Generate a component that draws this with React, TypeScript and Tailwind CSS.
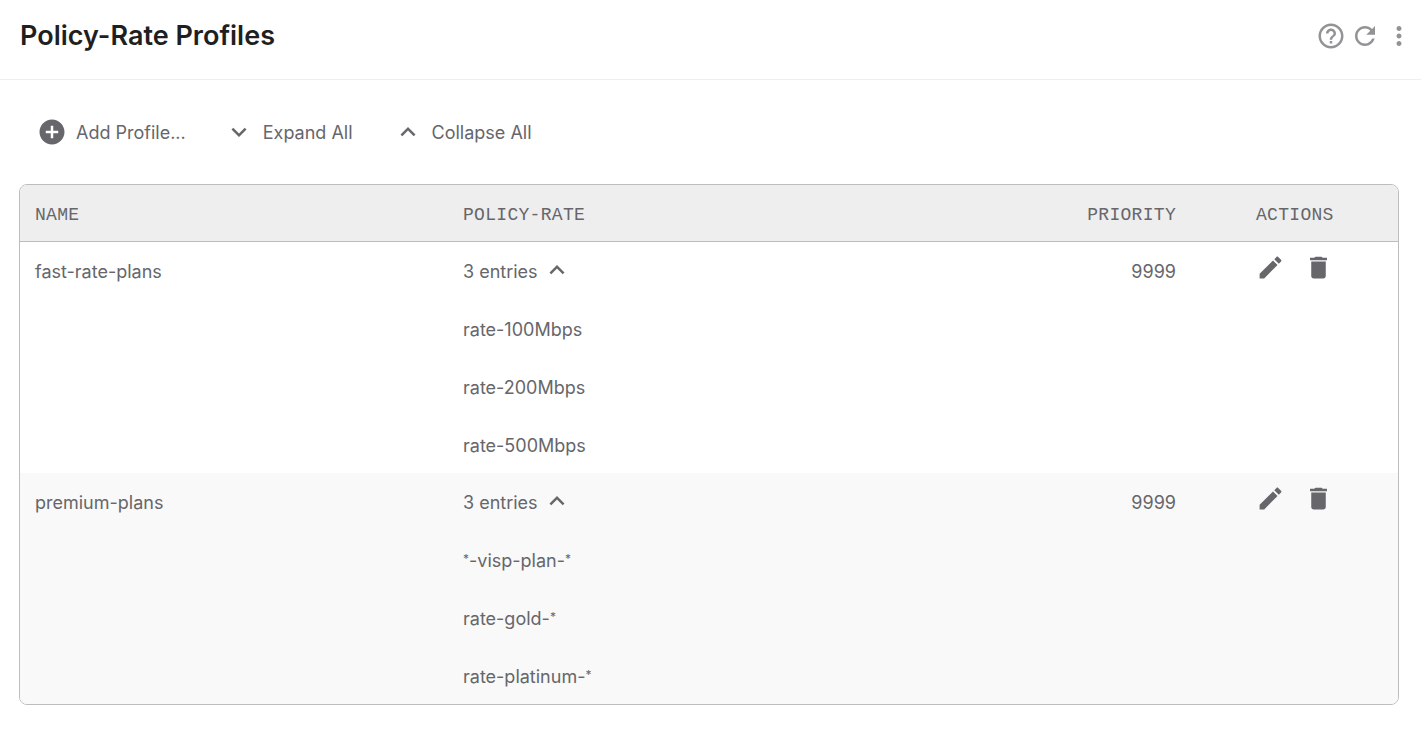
import type { ReactNode } from 'react'

const sans = 'font-["Inter","Liberation_Sans",sans-serif]'

function Icon({ d, className }: { d: string; className?: string }) {
  return (
    <svg viewBox="0 0 24 24" fill="currentColor" className={className}>
      <path d={d} />
    </svg>
  )
}

const paths = {
  help: 'M11 18h2v-2h-2v2zm1-16C6.48 2 2 6.48 2 12s4.48 10 10 10 10-4.48 10-10S17.52 2 12 2zm0 18c-4.41 0-8-3.59-8-8s3.59-8 8-8 8 3.59 8 8-3.59 8-8 8zm0-14c-2.21 0-4 1.79-4 4h2c0-1.1.9-2 2-2s2 .9 2 2c0 2-3 1.75-3 5h2c0-2.25 3-2.5 3-5 0-2.21-1.79-4-4-4z',
  refresh: 'M17.65 6.35C16.2 4.9 14.21 4 12 4c-4.42 0-7.99 3.58-7.99 8s3.57 8 7.99 8c3.73 0 6.84-2.55 7.73-6h-2.08c-.82 2.33-3.04 4-5.65 4-3.31 0-6-2.69-6-6s2.69-6 6-6c1.66 0 3.14.69 4.22 1.78L13 11h7V4l-2.35 2.35z',
  more: 'M12 8c1.1 0 2-.9 2-2s-.9-2-2-2-2 .9-2 2 .9 2 2 2zm0 2c-1.1 0-2 .9-2 2s.9 2 2 2 2-.9 2-2-.9-2-2-2zm0 6c-1.1 0-2 .9-2 2s.9 2 2 2 2-.9 2-2-.9-2-2-2z',
  add: 'M12 2C6.48 2 2 6.48 2 12s4.48 10 10 10 10-4.48 10-10S17.52 2 12 2zm5 11h-4v4h-2v-4H7v-2h4V7h2v4h4v2z',
  down: 'M16.59 8.59L12 13.17 7.41 8.59 6 10l6 6 6-6z',
  up: 'M12 8l-6 6 1.41 1.41L12 10.83l4.59 4.58L18 14z',
  edit: 'M3 17.25V21h3.75L17.81 9.94l-3.75-3.75L3 17.25zM20.71 7.04c.39-.39.39-1.02 0-1.41l-2.34-2.34c-.39-.39-1.02-.39-1.41 0l-1.83 1.83 3.75 3.75 1.83-1.83z',
  trash: 'M6 19c0 1.1.9 2 2 2h8c1.1 0 2-.9 2-2V7H6v12zM19 4h-3.5l-1-1h-5l-1 1H5v2h14V4z',
}

function ToolButton({ icon, children, className }: { icon: string; children: ReactNode; className?: string }) {
  return (
    <button className={`flex items-center text-[#66666b] ${className ?? ''}`}>
      <Icon d={icon} className="size-[30px] shrink-0" />
      <span className="ml-[9px] pt-[2px] text-[18px] leading-6">{children}</span>
    </button>
  )
}

function Star() {
  return <span className="align-[4px] text-[12px] leading-none">*</span>
}

const rows = [
  {
    name: 'fast-rate-plans',
    bg: 'bg-white',
    entries: [<>rate-100Mbps</>, <>rate-200Mbps</>, <>rate-500Mbps</>],
  },
  {
    name: 'premium-plans',
    bg: 'bg-[#f9f9f9]',
    entries: [
      <><Star />-visp-plan-<Star /></>,
      <>rate-gold-<Star /></>,
      <>rate-platinum-<Star /></>,
    ],
  },
]

const gridCols = 'grid grid-cols-[428px_1fr_200px_157px]'

export default function App() {
  return (
    <div className={`min-h-[752px] bg-white ${sans}`}>
      <header className="flex h-20 items-center justify-between border-b border-[#eeeeee] pl-5 pr-[7px] pb-[8px]">
        <h1 className="text-[27px] font-semibold leading-8 text-[#1f1f22]">Policy-Rate Profiles</h1>
        <div className="flex items-center text-[#939396]">
          <Icon d={paths.help} className="size-[30px]" />
          <Icon d={paths.refresh} className="ml-[4px] size-[30px]" />
          <Icon d={paths.more} className="ml-[4px] size-[30px]" />
        </div>
      </header>

      <div className="pl-[19px] pr-[22px]">
        <div className="flex items-center pl-[18px] pt-[37px] pb-[37px]">
          <ToolButton icon={paths.add}>Add Profile...</ToolButton>
          <ToolButton icon={paths.down} className="ml-[38px]">Expand All</ToolButton>
          <ToolButton icon={paths.up} className="ml-[40px]">Collapse All</ToolButton>
        </div>

        <div className="overflow-hidden rounded-lg border border-[#bdbdbd] text-[#66666b]">
          <div className={`${gridCols} h-[57px] items-center border-b border-[#bdbdbd] bg-[#eeeeee] pt-[4px] font-["Liberation_Mono",monospace] text-[18px] tracking-[0.3px]`}>
            <div className="pl-[15px]">NAME</div>
            <div className="pl-[15px]">POLICY-RATE</div>
            <div className="pr-[65px] text-right">PRIORITY</div>
            <div className="pl-[15px]">ACTIONS</div>
          </div>
          {rows.map((row) => (
            <div key={row.name} className={`${gridCols} ${row.bg} h-[231px] overflow-hidden text-[18px]`}>
              <div className="flex h-[58px] items-center pl-[15px]">{row.name}</div>
              <div className="pl-[15px]">
                <div className="flex h-[58px] items-center">
                  3 entries
                  <Icon d={paths.up} className="ml-[4px] size-[30px] -translate-y-px" />
                </div>
                {row.entries.map((entry, i) => (
                  <div key={i} className="flex h-[58px] items-center">
                    <span>{entry}</span>
                  </div>
                ))}
              </div>
              <div className="flex h-[58px] items-center justify-end pr-[65px]">9999</div>
              <div className="flex h-[50px] items-center pl-[15px]">
                <Icon d={paths.edit} className="size-[29px]" />
                <Icon d={paths.trash} className="ml-[19px] size-[29px]" />
              </div>
            </div>
          ))}
        </div>
      </div>
    </div>
  )
}
